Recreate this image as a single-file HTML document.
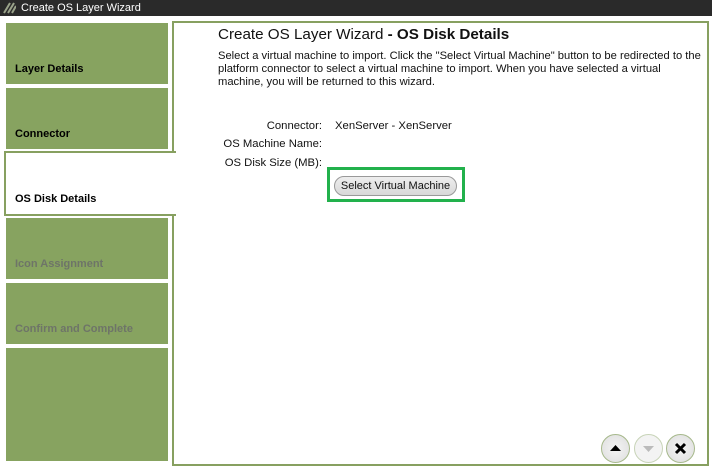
<!DOCTYPE html>
<html><head><style>
*{margin:0;padding:0;box-sizing:border-box}
body{width:712px;height:470px;background:#fff;font-family:"Liberation Sans",Arial,sans-serif;position:relative;overflow:hidden}
.bar{position:absolute;left:0;top:0;width:712px;height:16px;background:#2a2a2a;color:#fff;font-size:11px;line-height:16px}
.bar span{position:absolute;left:21px;top:0}
.tile{position:absolute;left:6px;width:162px;background:#87a360;font-size:11px;font-weight:bold}
.tile b{position:absolute;left:9px;bottom:9px}
.dim{color:#6e7468}
.panel{position:absolute;left:172px;top:21px;width:537px;height:445px;border:2.5px solid #87a060}
.active{position:absolute;left:4px;top:151px;width:172px;height:65px;background:#fff;border:2px solid #87a060;border-right:none;font-size:11px;font-weight:bold}
.active b{position:absolute;left:9px;bottom:9px}
.abs{position:absolute}
.lbl{position:absolute;right:390px;font-size:11.3px;color:#111}
.btn{position:absolute;width:29px;height:29px;border-radius:50%;border:1px solid #a7b98c;background:radial-gradient(#f4f4f4,#ddd)}
</style></head><body>
<div class="bar"><svg class="abs" style="left:3px;top:2px" width="13" height="12"><path d="M1 11L7 1M5 11L11 1M9 11L13 4" stroke="#9aa38a" stroke-width="2"/></svg><span>Create OS Layer Wizard</span></div>
<div class="tile" style="top:23px;height:61px"><b>Layer Details</b></div>
<div class="tile" style="top:88px;height:61px"><b>Connector</b></div>
<div class="panel"></div>
<div class="active"><b style="left:9px">OS Disk Details</b></div>
<div class="tile" style="top:218px;height:61px"><b class="dim">Icon Assignment</b></div>
<div class="tile" style="top:283px;height:61px"><b class="dim">Confirm and Complete</b></div>
<div class="tile" style="top:348px;height:113px"></div>
<div class="abs" style="left:218px;top:26px;font-size:15.2px;color:#111">Create OS Layer Wizard <b>- OS Disk Details</b></div>
<div class="abs" style="left:218px;top:50px;width:492px;font-size:11.2px;line-height:13px;color:#111;white-space:nowrap">Select a virtual machine to import. Click the "Select Virtual Machine" button to be redirected to the<br>platform connector to select a virtual machine to import. When you have selected a virtual<br>machine, you will be returned to this wizard.</div>
<div class="lbl" style="top:120px">Connector:</div>
<div class="abs" style="left:335px;top:120px;font-size:11.3px;color:#111">XenServer - XenServer</div>
<div class="lbl" style="top:138px">OS Machine Name:</div>
<div class="lbl" style="top:157px">OS Disk Size (MB):</div>
<div class="abs" style="left:327px;top:167px;width:138px;height:35px;border:3px solid #22b14c"></div>
<div class="abs" style="left:334px;top:176px;width:123px;height:20px;border:1px solid #999;border-radius:10px;background:linear-gradient(#eee,#d8d8d8);font-size:11px;line-height:18px;text-align:center;color:#111">Select Virtual Machine</div>
<div class="btn" style="left:601px;top:434px"><svg width="27" height="27"><path d="M8 16L13.5 10L19 16Z" fill="#000"/></svg></div>
<div class="btn" style="left:634px;top:434px;border-color:#c8d4b8;background:#f3f3f3"><svg width="27" height="27"><path d="M8 11L13.5 17L19 11Z" fill="#bbb"/></svg></div>
<div class="btn" style="left:666px;top:434px"><svg width="27" height="27"><path d="M9 9L18 18M18 9L9 18" stroke="#000" stroke-width="3"/></svg></div>
</body></html>
